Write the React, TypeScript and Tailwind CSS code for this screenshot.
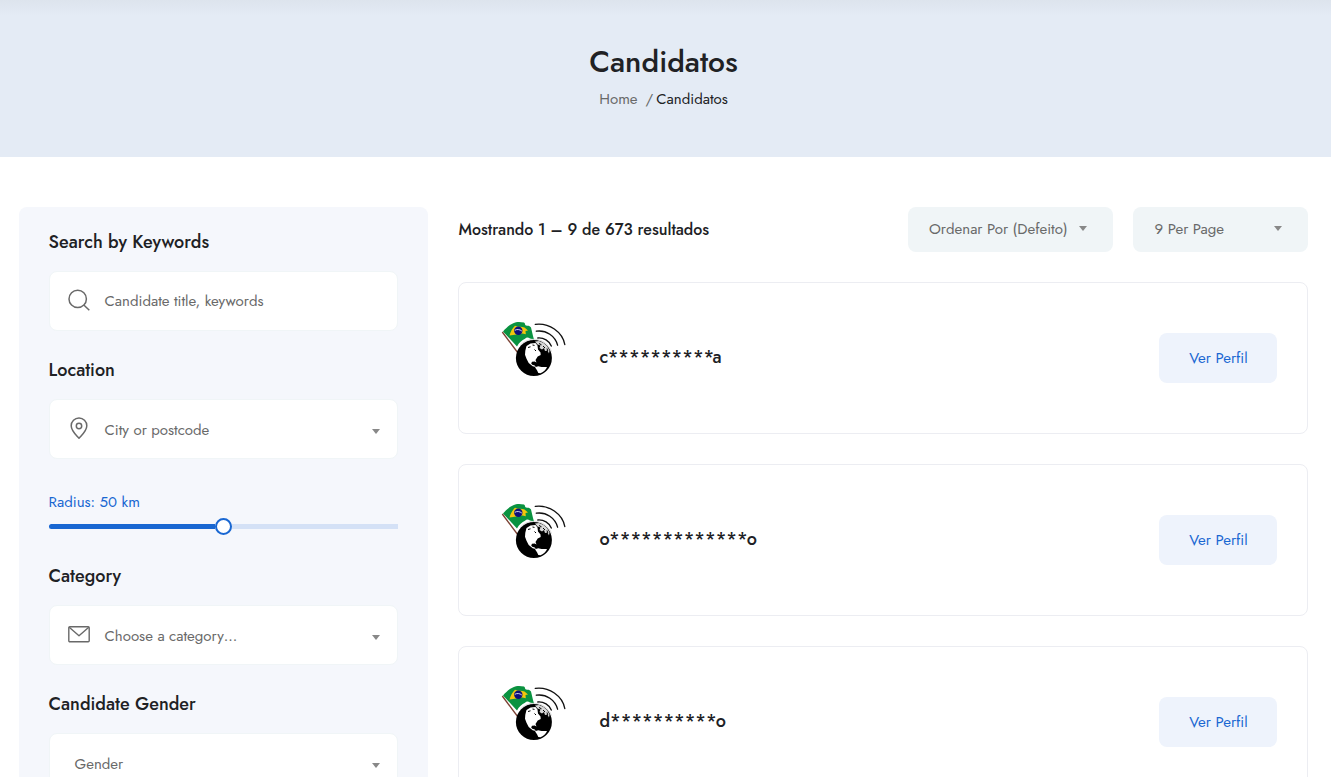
import React from "react";

const candidates = [
  { name: "c**********a" },
  { name: "o*************o" },
  { name: "d**********o" },
];

function Caret() {
  return (
    <svg width="8" height="5" viewBox="0 0 8 5" className="shrink-0">
      <path d="M0 0h8L4 5z" fill="#888" />
    </svg>
  );
}

function SearchIcon() {
  return (
    <svg width="24" height="24" viewBox="0 0 24 24" fill="none" stroke="#696969" strokeWidth="1.5">
      <circle cx="10.7" cy="10.9" r="8.7" />
      <path d="M16.8 17l5.500 5.300" />
    </svg>
  );
}

function PinIcon() {
  return (
    <svg width="24" height="24" viewBox="0 0 24 24" fill="none" stroke="#696969" strokeWidth="1.5" strokeLinejoin="round">
      <path d="M12 22.300C9.500 19.400 4.200 15.100 4.200 9.800a7.800 7.800 0 0 1 15.600 0c0 5.300-5.300 9.600-7.800 12.500z" />
      <circle cx="12" cy="10" r="2.700" />
    </svg>
  );
}

function MailIcon() {
  return (
    <svg width="24" height="24" viewBox="0 0 24 24" fill="none" stroke="#696969" strokeWidth="1.4" strokeLinejoin="round">
      <rect x="1.800" y="4.700" width="20.400" height="15" rx="1" />
      <path d="M2.200 5.300L12 13.700l9.800-8.400" />
    </svg>
  );
}

function GlobeLogo() {
  return (
    <svg width="90" height="90" viewBox="0 0 90 90" className="shrink-0">
      <path d="M14.300 22L30 43" stroke="#7a4032" strokeWidth="1.300" />
      <path d="M15 21.500C19 17 23 13.500 28 12.300c3-.8 5-.3 8 .2 1.500.8.500 2.500 2 3 1.500.3 4 0 5 2 .8 3 1.500 7 3 12l-4-1c-2-1.500-3.500-1.500-5 .2-3 1.800-6 3.500-8 7.800z" fill="#0a9240" />
      <path d="M21.500 25.500c1-4 3-7.500 5.500-9.800 3 1.300 7 .8 9.500 1.800l3.500 3-2.500.5.300 3.300-3.300-.8c-4 .5-8 1.500-13 2z" fill="#f3c60c" />
      <circle cx="30.300" cy="20.800" r="4.200" fill="#10107a" />
      <path d="M26.800 20.300c2.300-1.300 5-.9 7 .7" stroke="#e8ecff" strokeWidth=".9" fill="none" />
      <circle cx="45.900" cy="48" r="18" fill="#000" />
      <path d="M38.500 36l4-2.500 5-.5 2 2.500.5 4 2.500 3 .2 2.500-3 1.500-2.200 3.500 1 2.500-1.800-1-2.700.3-.8 1.700 1 1.200 2.500.8 1.200 1.600-3.200-.8-4-3.300-2.200-4.200-1.500-4 .3-4z" fill="#fff" />
      <path d="M47 57.300l3.200-1 3.300.8 5.500-.2c-.8 2.600-3 4.400-6.500 6.300l-2.200-.2-1.300-2.700z" fill="#fff" />
      <path d="M47 31.500l4-.5 4.500 2 3.500 3 2.500 4.500-.5 3-1.500-3-2.500.5-1-3-2 1.500-2.500-1.500 1-2.500-3-1z" fill="#d8d8d8" />
      <g stroke="#000" fill="none" strokeWidth="1">
        <path d="M40 37.500l2.500-.7M44.500 35l2 .4M51 33.500l2.500 1.300M55 36l2 2M59 38.500l.8 2.500M46.500 39.500l1.500 1.500" />
      </g>
      <path d="M32.500 35a18.600 18.600 0 0 1 31 6.500" stroke="#c5c5c5" strokeWidth=".6" fill="none" />
      <g stroke="#111" strokeWidth="1.350" fill="none" strokeLinecap="round">
        <path d="M47.300 14.300C61 12.500 74.500 22 76.800 34.500" />
        <path d="M48.300 21.200c10-1.500 19 5 21.300 14" />
        <path d="M49.800 28c6-.5 11.500 3 13.500 8" />
      </g>
    </svg>
  );
}

function Field({ icon, label, caret = true, offset = "pt-px" }: { icon?: React.ReactNode; label: string; caret?: boolean; offset?: string }) {
  return (
    <div className="mt-4 flex h-[60px] items-center rounded-lg border border-[#f0f5f7] bg-white px-[17px] text-[15px] text-[#696969]">
      {icon ? <span className="mr-[13.6px] block pb-0.5">{icon}</span> : <span className="w-[7.6px]" />}
      <span className={offset}>{label}</span>
      {caret && <span className="ml-auto pt-1"><Caret /></span>}
    </div>
  );
}

function Heading({ children, className }: { children: React.ReactNode; className?: string }) {
  return <h4 className={`-ml-[0.4px] text-[18px] font-medium leading-[26px] text-[#202124] ${className ?? ""}`}>{children}</h4>;
}

export default function App() {
  return (
    <div className="h-[777px] overflow-hidden bg-white font-['Jost','Lato',sans-serif] text-[#202124]">
      <header className="flex h-[157px] flex-col items-center bg-[#e4ebf5] bg-[linear-gradient(#dde4ed,#e4ebf5_16px)] pr-1 pt-[42px]">
        <h1 className="text-[30px] font-medium leading-10">Candidatos</h1>
        <nav className="mt-[5px] flex text-[15px] leading-6">
          <span className="text-[#696969]">Home</span>
          <span className="ml-2 mr-[3px] text-[#696969]">/</span>
          <span>Candidatos</span>
        </nav>
      </header>

      <main className="flex gap-[30px] pl-[19px] pr-[23px] pt-[50px]">
        <aside className="h-[620px] w-[409px] shrink-0 rounded-lg bg-[#f5f7fc] px-[30px] pt-[22px]">
          <Heading>Search by Keywords</Heading>
          <Field icon={<SearchIcon />} label="Candidate title, keywords" caret={false} offset="pt-0" />
          <Heading className="mt-[26px]">Location</Heading>
          <Field icon={<PinIcon />} label="City or postcode" offset="pt-0.5" />
          <p className="-ml-[0.4px] mt-[31px] text-[15px] leading-6 text-[#1967d2]">Radius: 50 km</p>
          <div className="mt-[10px] flex h-[5px] items-center rounded-l-full bg-[#d4e1f6]">
            <div className="h-[5px] w-[166px] rounded-l-full bg-[#1967d2]" />
            <div className="size-[17px] shrink-0 rounded-full border-2 border-[#1967d2] bg-white" />
          </div>
          <Heading className="mt-[34px]">Category</Heading>
          <Field icon={<MailIcon />} label="Choose a category…" offset="pt-0.5" />
          <Heading className="mt-[26px]">Candidate Gender</Heading>
          <Field label="Gender" offset="pt-0.5" />
        </aside>

        <section className="min-w-0 flex-1">
          <div className="flex h-[45px] items-center">
            <p className="mr-auto pl-[0.5px] text-[16px] font-medium">Mostrando 1 – 9 de 673 resultados</p>
            <div className="flex h-full w-[205px] items-center justify-between rounded-lg bg-[#f0f5f7] pl-[21px] pr-[26px] text-[15px] text-[#696969]">
              <span>Ordenar Por (Defeito)</span>
              <span className="flex pb-[3px]"><Caret /></span>
            </div>
            <div className="ml-5 flex h-full w-[175px] items-center justify-between rounded-lg bg-[#f0f5f7] pl-[21.5px] pr-[26px] text-[15px] text-[#696969]">
              <span>9 Per Page</span>
              <span className="flex pb-[3px]"><Caret /></span>
            </div>
          </div>
          <div className="mt-[30px] flex flex-col gap-[30px]">
            {candidates.map((c) => (
              <article key={c.name} className="flex h-[152px] items-center rounded-lg border border-[#ecedf2] pl-[29px] pr-[30px]">
                <div className="mr-[21.5px] pb-[6px]">
                  <GlobeLogo />
                </div>
                <h4 className="pb-0.5 text-[18px] font-medium leading-6">{c.name}</h4>
                <button className="ml-auto h-[50px] w-[118px] rounded-lg bg-[#eef3fc] pl-px text-[15px] text-[#1967d2]">Ver Perfil</button>
              </article>
            ))}
          </div>
        </section>
      </main>
    </div>
  );
}
